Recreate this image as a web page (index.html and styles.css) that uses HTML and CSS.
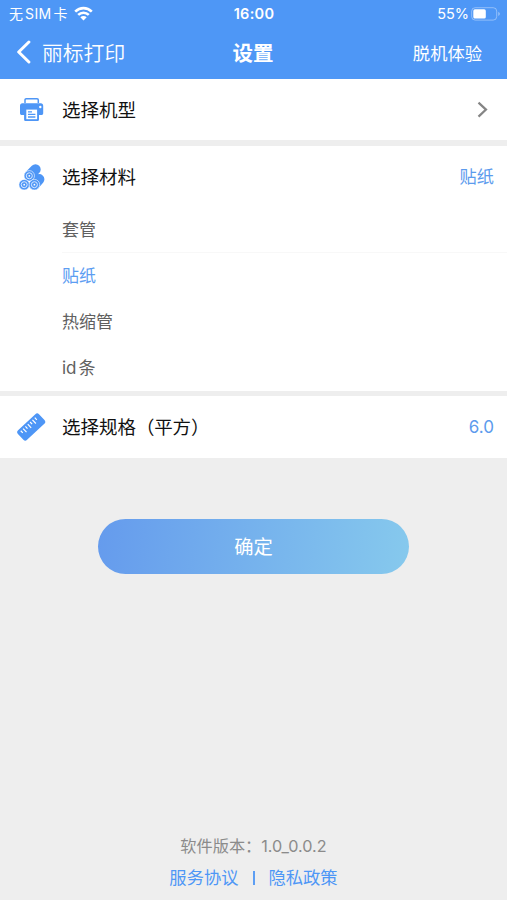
FILE: index.html
```html
<!DOCTYPE html>
<html lang="zh-CN">
<head>
<meta charset="utf-8">
<title>设置</title>
<link rel="stylesheet" href="styles.css">
</head>
<body>
<header class="top">
  <div class="status">
    <div class="carrier"><span>无<span class="sim">SIM</span>卡</span>
      <svg class="wifi" width="19" height="15" viewBox="0 0 19 15" fill="none" stroke="#fff" stroke-width="2.6"><path d="M1.2 5.6C6 .9 13 .9 17.8 5.6M4.2 8.9c3-2.9 7.6-2.9 10.6 0"/><path d="M6.3 11.2c1.8-1.7 4.6-1.7 6.4 0L9.5 14.6z" fill="#fff" stroke="none"/></svg>
    </div>
    <span class="time">16:00</span>
    <div class="power"><span>55%</span>
      <svg width="30" height="14" viewBox="0 0 30 14"><rect x=".7" y=".7" width="25" height="12.4" rx="3.5" fill="none" stroke="#fff" stroke-opacity=".38"/><rect x="2.3" y="2.3" width="12.5" height="9.2" rx="1.6" fill="#fff"/><path d="M27.3 4.8c2 .8 2 3.4 0 4.2z" fill="#fff" fill-opacity=".45"/></svg>
    </div>
  </div>
  <nav class="nav">
    <div class="back"><svg width="15" height="24" viewBox="0 0 15 24" fill="none" stroke="#fff" stroke-width="3" stroke-linecap="round" stroke-linejoin="round"><path d="M12.9 2 2.7 12l10.2 10"/></svg><span>丽标打印</span></div>
    <h1>设置</h1>
    <span class="offline">脱机体验</span>
  </nav>
</header>
<main>
  <section class="card model">
    <div class="row">
      <svg class="icon" width="30" height="30" viewBox="0 0 30 30"><path d="M9 8V5c0-.8.5-1.2 1.2-1.2h10.9c.8 0 1.2.5 1.2 1.2v3" fill="none" stroke="#4e96f6" stroke-width="1.5"/><path d="M6.3 8.3h18.6c1.4 0 2.3 1 2.3 2.4v7.5c0 1.1-.7 1.8-1.8 1.8H23v4.4c0 1-.7 1.7-1.7 1.7H9.8c-1 0-1.7-.7-1.7-1.7V20H5.8c-1.1 0-1.8-.7-1.8-1.8v-7.5c0-1.4 1-2.4 2.3-2.4z" fill="#4e96f6"/><circle cx="24.3" cy="12" r="1.2" fill="#fff"/><path d="M10.3 14.6h10.8v9.6H10.3z" fill="#fff"/><path d="M12 16.8h4m-4 2.6h7.4M12 22h7.4" stroke="#4e96f6" stroke-width="1.3"/></svg>
      <h2>选择机型</h2>
      <svg class="arrow" width="14" height="18" viewBox="0 0 14 18" fill="none" stroke="#858585" stroke-width="2.2"><path d="M2.5 1.6 10 8.6l-7.5 7"/></svg>
    </div>
  </section>
  <section class="card material">
    <div class="row">
      <svg class="icon" width="30" height="30" viewBox="0 0 30 30"><g stroke="#4e96f6" stroke-width="10.4" stroke-linecap="round"><path d="m13.3 13.6 6.2-6.2M18.4 22.7l4.8-5.4"/></g><g fill="#4e96f6" stroke="#fff" stroke-width=".6"><circle cx="13.3" cy="13.8" r="5.2"/><circle cx="8.2" cy="22.7" r="5.3"/><circle cx="18.4" cy="22.7" r="5.3"/></g><g fill="none" stroke="#d9e9ff" stroke-width="1"><circle cx="13.3" cy="13.8" r="3"/><circle cx="8.2" cy="22.7" r="3"/><circle cx="18.4" cy="22.7" r="3"/></g><g fill="#fff"><circle cx="13.3" cy="13.8" r=".9"/><circle cx="8.2" cy="22.7" r=".9"/><circle cx="18.4" cy="22.7" r=".9"/></g></svg>
      <h2>选择材料</h2>
      <span class="value">贴纸</span>
    </div>
    <ul class="options">
      <li class="first">套管</li>
      <li class="selected">贴纸</li>
      <li>热缩管</li>
      <li><span class="latin">id</span>条</li>
    </ul>
  </section>
  <section class="card size">
    <div class="row">
      <svg class="icon" width="30" height="30" viewBox="0 0 30 30"><g transform="rotate(-43 15.2 15)"><rect x=".8" y="8.4" width="28.8" height="13.2" rx="2.6" fill="#4e96f6"/><path d="M5 10.6v3m3.2-3v5m3.2-5v3m3.2-3v5m3.2-5v3m3.2-3v5m3.2-5v3" stroke="#fff" stroke-width="1.2"/></g></svg>
      <h2>选择规格<span class="unit">（平方）</span></h2>
      <span class="value number">6.0</span>
    </div>
  </section>
  <button class="confirm">确定</button>
</main>
<footer>
  <p class="version">软件版本：<span>1.0_0.0.2</span></p>
  <p class="links"><a>服务协议</a><i></i><a>隐私政策</a></p>
</footer>
</body>
</html>
```
FILE: styles.css
```css
* { box-sizing: border-box; margin: 0; padding: 0; }
body {
  height: 900px;
  display: flex;
  flex-direction: column;
  overflow: hidden;
  background: #eee;
  font-family: Inter, "Noto Sans CJK SC", sans-serif;
}
svg { display: block; flex: none; }
.top { height: 79px; background: #4e97f6; color: #fff; }
.status, .nav { display: grid; grid-template-columns: 1fr auto 1fr; align-items: center; }
.status { height: 27px; padding: 0 6px 0 9px; font-size: 14.5px; }
.carrier, .power, .back { display: flex; align-items: center; }
.carrier { gap: 6px; padding-bottom: 1px; white-space: nowrap; font-size: 14px; }
.sim { margin: 0 2px; letter-spacing: .4px; }
.time { font-weight: 600; font-size: 14.5px; letter-spacing: .3px; transform: translateX(-1px); }
.power { justify-content: flex-end; gap: 2px; }
.nav { height: 50px; padding: 0 25px 0 16px; }
.back { gap: 11px; font-size: 20.8px; font-weight: 350; }
.nav h1 { font-size: 20.5px; font-weight: 700; transform: translateX(4px); }
.offline { justify-self: end; font-size: 17.3px; }
.card { background: #fff; }
.model { height: 61px; margin-bottom: 6px; }
.material { height: 245px; margin-bottom: 5px; }
.size { height: 62px; }
.row { height: 61px; padding: 0 13px 0 16px; display: flex; align-items: center; }
.row h2 { flex: 1; margin-left: 16px; padding-bottom: 2px; color: #111; font-size: 18.5px; font-weight: 400; }
.unit { letter-spacing: -.2px; }
.arrow { margin-right: 4px; }
.value { padding-bottom: 2px; color: #5c9bed; font-size: 17.2px; }
.number { padding-bottom: 0; font-size: 17px; }
.options { list-style: none; padding-left: 62px; color: #606060; font-size: 17px; }
.options li { height: 46px; line-height: 47px; }
.options .first { border-bottom: 1px solid #f8f8f8; }
.options .selected { color: #5c9df2; }
.latin { margin-right: 2px; }
.confirm {
  display: block;
  width: 311px;
  height: 55px;
  margin: 61px auto 0;
  padding-bottom: 2px;
  border: 0;
  border-radius: 28px;
  background: linear-gradient(96deg, #659bed, #86c9ed);
  color: #fff;
  font: 19.3px "Noto Sans CJK SC", sans-serif;
}
footer { margin-top: auto; height: 70px; text-align: center; }
.version { height: 31px; line-height: 32px; color: #8b8b8b; font-size: 16.2px; }
.links { height: 31px; display: flex; align-items: center; justify-content: center; color: #4e97f6; font-size: 17.3px; }
.links i { width: 2px; height: 14px; margin: 3px 14px 0; background: #5d9ef3; }
```
